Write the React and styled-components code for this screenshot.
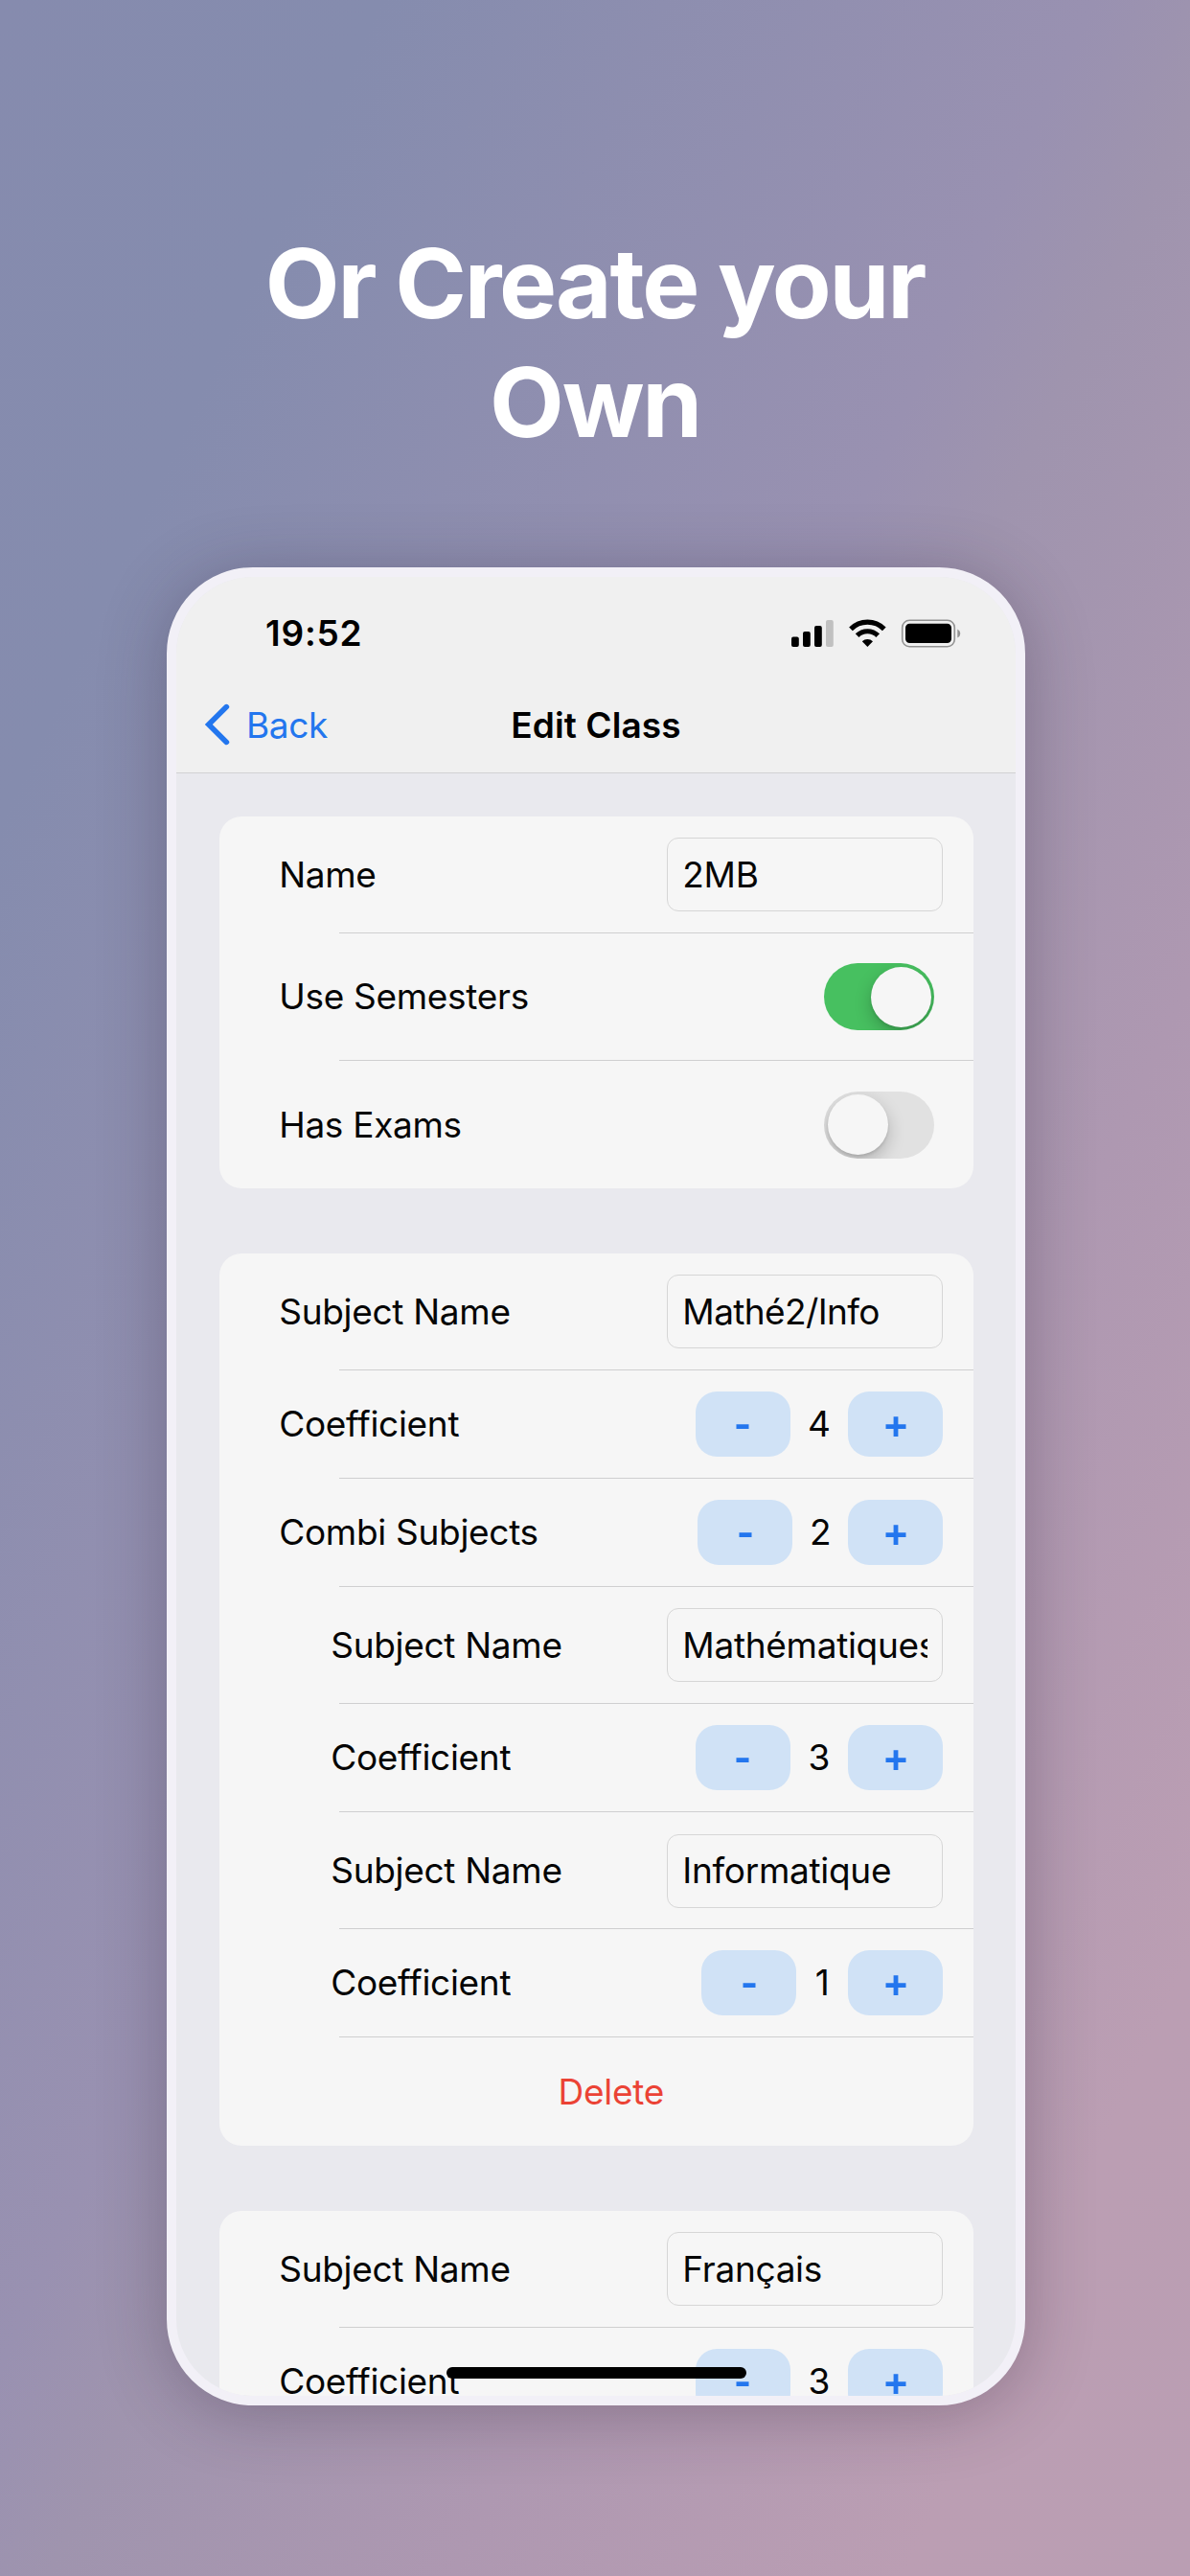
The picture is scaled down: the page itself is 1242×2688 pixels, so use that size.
import React from "react";
import styled, { createGlobalStyle } from "styled-components";

const Global = createGlobalStyle`
  * { box-sizing: border-box; }
  body { margin: 0; font-family: Inter, "Liberation Sans", sans-serif; color: #050505; }
`;

const Poster = styled.main`
  width: 1242px;
  height: 2688px;
  overflow: hidden;
  display: flex;
  flex-direction: column;
  align-items: center;
  padding-top: 233px;
  background: linear-gradient(
    to bottom right,
    #868bae 0%,
    #858cae 16%,
    #9991b1 46%,
    #9f94ae 52%,
    #ae98b1 69%,
    #bb9eb3 88%,
    #ba9eb3 100%
  );
`;

const Headline = styled.h1`
  margin: 0 0 111px;
  width: 800px;
  text-align: center;
  font-size: 101px;
  line-height: 124px;
  font-weight: 700;
  letter-spacing: -2.2px;
  word-spacing: -1px;
  color: #fff;
`;

const Phone = styled.section`
  position: relative;
  left: 1px;
  width: 896px;
  height: 1918px;
  flex: none;
  border: 10px solid #f2f0f7;
  border-radius: 90px;
  overflow: hidden;
  background: #e9e9ee;
  box-shadow: 0 8px 70px rgba(40, 30, 50, 0.3);
`;

const Header = styled.header`
  height: 205px;
  background: #f0f0f0;
  border-bottom: 1px solid #d2d2d4;
`;

const StatusBar = styled.div`
  height: 118px;
  padding: 0 56.5px 0 93px;
  display: flex;
  justify-content: space-between;
  align-items: center;
`;

const Clock = styled.span`
  font-size: 37px;
  font-weight: 600;
  line-height: 44px;
  letter-spacing: 0.8px;
  color: #000;
`;

const NavBar = styled.nav`
  height: 72px;
  display: grid;
  grid-template-columns: 1fr auto 1fr;
  align-items: center;
  padding: 0 29px;
`;

const BackLink = styled.a`
  display: flex;
  align-items: center;
  gap: 17px;
  color: #2376ee;
  font-size: 37px;
  letter-spacing: -0.4px;
`;

const Title = styled.h2`
  margin: 0;
  font-size: 37px;
  font-weight: 600;
  letter-spacing: 0.1px;
  color: #000;
`;

const Form = styled.div`
  padding: 44.7px 44.3px 0 44.7px;
  display: flex;
  flex-direction: column;
  gap: 67.4px;
`;

const Card = styled.div`
  border-radius: 23px;
  background: #f6f6f6;
  overflow: hidden;
`;

const Row = styled.div`
  height: ${(p) => p.$h}px;
  padding: 0 31.4px ${(p) => p.$lift || 0}px ${(p) => (p.$indent ? 116.5 : 62.5)}px;
  display: flex;
  align-items: center;
  justify-content: ${(p) => (p.$center ? "center" : "space-between")};
  background: ${(p) =>
    p.$last ? "none" : "linear-gradient(#cfcfd0, #cfcfd0) 125px 100% / 100% 1px no-repeat"};
`;

const Label = styled.span`
  font-size: 37px;
  line-height: 46px;
  letter-spacing: ${(p) => p.$track ?? -0.3}px;
  white-space: nowrap;
`;

const Field = styled.div`
  width: 288.5px;
  height: 77px;
  padding: 0 15.5px 0 15.5px;
  border: 1px solid #d6d6d6;
  border-radius: 12px;
  display: flex;
  align-items: center;
`;

const FieldText = styled(Label)`
  width: 100%;
  overflow: hidden;
`;

const Track = styled.div`
  width: 115px;
  height: 70px;
  margin-right: 9px;
  padding: 3.2px;
  border-radius: 35px;
  display: flex;
  overflow: hidden;
  justify-content: ${(p) => (p.$on ? "flex-end" : "flex-start")};
  background: ${(p) => (p.$on ? "#47c060" : "#e1e1e1")};
`;

const Knob = styled.div`
  width: 63.4px;
  height: 63.4px;
  border-radius: 50%;
  background: #f6f6f6;
  box-shadow: 0 7px 18px rgba(0, 0, 0, 0.22), 0 2px 3px rgba(0, 0, 0, 0.1);
`;

const Stepper = styled.div`
  display: flex;
  align-items: center;
`;

const StepButton = styled.button`
  width: 99px;
  height: 67.6px;
  padding: 0;
  border: 0;
  border-radius: 22px;
  background: #d0e2f6;
  color: #2376ee;
  display: flex;
  align-items: center;
  justify-content: center;
`;

const Count = styled.span`
  width: ${(p) => p.$w}px;
  text-align: center;
  font-size: 37px;
  line-height: 46px;
`;

const Delete = styled(Label)`
  padding-top: 1px;
  color: #eb4335;
`;

const HomeBar = styled.div`
  position: absolute;
  left: 282px;
  bottom: 18px;
  width: 313px;
  height: 12px;
  border-radius: 6px;
  background: #000;
`;

const StatusIcons = () => (
  <svg width="178" height="30" viewBox="0 0 178 30">
    <rect x="0" y="18.5" width="7.8" height="10.5" rx="2" />
    <rect x="12" y="13" width="7.8" height="16" rx="2" />
    <rect x="24" y="7" width="7.8" height="22" rx="2" />
    <rect x="36" y="1" width="7.8" height="28" rx="2" fill="#c0c0c0" />
    <g fill="none" stroke="#000" strokeWidth="5.2">
      <path d="M62 10.3a24.5 24.5 0 0 1 34.8 0" />
      <path d="M68.6 17.2a15.3 15.3 0 0 1 21.6 0" />
    </g>
    <path d="M79.4 29l-5.6-5.7a8.2 8.2 0 0 1 11.2 0z" />
    <rect x="115.7" y="1.3" width="54.6" height="27.4" rx="7.5" fill="none" stroke="#929292" strokeWidth="1.6" />
    <rect x="119" y="4.7" width="48" height="20.3" rx="4.4" />
    <path d="M173.3 10.4q3 1.6 3 4.6t-3 4.6z" fill="#929292" />
  </svg>
);

const Chevron = () => (
  <svg width="27" height="44" viewBox="0 0 27 44">
    <path d="M23.4 3.6L4.8 22l18.6 18.4" fill="none" stroke="#2376ee" strokeWidth="5.6" strokeLinecap="round" strokeLinejoin="miter" />
  </svg>
);

const Minus = () => (
  <svg width="14" height="22" viewBox="0 0 14 22">
    <path d="M.5 13.6h13" stroke="currentColor" strokeWidth="4.8" />
  </svg>
);

const Plus = () => (
  <svg width="22" height="26" viewBox="0 0 22 26">
    <path d="M.5 15.6h21M11 5.3v20.6" stroke="currentColor" strokeWidth="4.8" />
  </svg>
);

const COUNT_WIDTH = { 1: 54, 2: 58.3, 3: 60.7, 4: 60.7 };

const FieldRow = ({ label, value, track, indent }) => (
  <Row $h={122.2} $indent={indent}>
    <Label>{label}</Label>
    <Field>
      <FieldText $track={track}>{value}</FieldText>
    </Field>
  </Row>
);

const StepRow = ({ label, value, indent }) => (
  <Row $h={113} $indent={indent} $lift={1}>
    <Label>{label}</Label>
    <Stepper>
      <StepButton aria-label="decrease"><Minus /></StepButton>
      <Count $w={COUNT_WIDTH[value]}>{value}</Count>
      <StepButton aria-label="increase"><Plus /></StepButton>
    </Stepper>
  </Row>
);

const SwitchRow = ({ label, on, last }) => (
  <Row $h={133.2} $last={last}>
    <Label>{label}</Label>
    <Track $on={on}><Knob /></Track>
  </Row>
);

export default function App() {
  return (
    <Poster>
      <Global />
      <Headline>Or Create your Own</Headline>
      <Phone>
        <Header>
          <StatusBar>
            <Clock>19:52</Clock>
            <StatusIcons />
          </StatusBar>
          <NavBar>
            <BackLink><Chevron />Back</BackLink>
            <Title>Edit Class</Title>
          </NavBar>
        </Header>
        <Form>
          <Card>
            <FieldRow label="Name" value="2MB" />
            <SwitchRow label="Use Semesters" on />
            <SwitchRow label="Has Exams" last />
          </Card>
          <Card>
            <FieldRow label="Subject Name" value="Mathé2/Info" track={-0.6} />
            <StepRow label="Coefficient" value={4} />
            <StepRow label="Combi Subjects" value={2} />
            <FieldRow label="Subject Name" value="Mathématiques" indent />
            <StepRow label="Coefficient" value={3} indent />
            <FieldRow label="Subject Name" value="Informatique" indent />
            <StepRow label="Coefficient" value={1} indent />
            <Row $h={113} $center $last>
              <Delete>Delete</Delete>
            </Row>
          </Card>
          <Card>
            <FieldRow label="Subject Name" value="Français" />
            <StepRow label="Coefficient" value={3} />
          </Card>
        </Form>
        <HomeBar />
      </Phone>
    </Poster>
  );
}
